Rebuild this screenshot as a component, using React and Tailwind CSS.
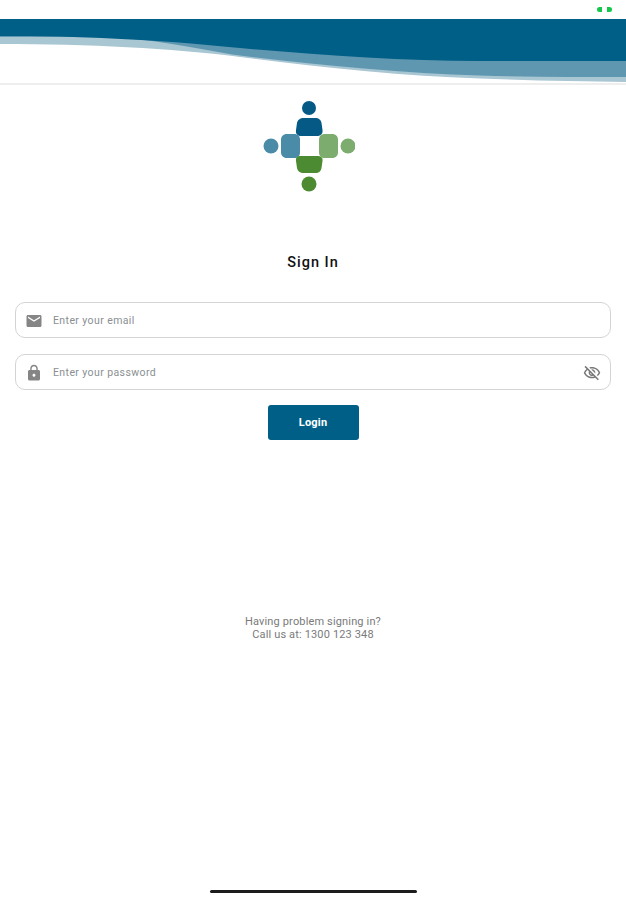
import React from 'react';
import { MdEmail, MdLock, MdOutlineVisibilityOff } from 'react-icons/md';

const Wave = () => (
    <svg viewBox="0 0 626 64" className="block w-full h-[64px]">
        <rect width="626" height="64" fill="#ffffff" />
        {/* Pale bottom band */}
        <path d="M0 0H626V63C580 62.5 530 61.5 480 59.5C400 57 320 48 240 38C170 29 90 25 0 25Z" fill="#a9c6d3" />
        {/* Mid band */}
        <path d="M0 0H626V58C580 58 530 58 480 56.500C400 54 320 46 240 36.500C200 31 170 22 110 18H0Z" fill="#6097b0" />
        {/* Dark top */}
        <path d="M0 0H626V42H480C400 42 320 36 240 29C150 20 80 17 0 17Z" fill="#005f87" />
    </svg>
);

const Logo = () => (
    <svg viewBox="0 0 92 92" className="block w-[92px] h-[92px]">
        {/* Top figure */}
        <circle cx="46" cy="8" r="7" fill="#045a85" />
        <path d="M41 18H52C56 18 58 20 58.500 23L59.500 30C60 33.500 58 36 54 36H38C34 36 32.500 33.500 33 30L34 23C34.500 20 37 18 41 18Z" fill="#045a85" />
        {/* Left figure */}
        <circle cx="8" cy="46" r="7.5" fill="#4a8ba8" />
        <path d="M24 34H31C35 34 37 36 37 40V52C37 56 35 58 31 58H24C20 58 18 55.500 18 52V40C18 36.500 20 34 24 34Z" fill="#4a8ba8" />
        {/* Right figure */}
        <circle cx="85" cy="46" r="7.5" fill="#7cad6f" />
        <path d="M62 34H69C73 34 75 36.500 75 40V52C75 55.500 73 58 69 58H62C58 58 56 56 56 52V40C56 36 58 34 62 34Z" fill="#7cad6f" />
        {/* Bottom figure */}
        <circle cx="46" cy="84" r="7.5" fill="#4c8b32" />
        <path d="M38 56H54C58 56 60 57.500 59.500 61L58.500 68C58 71 56 73 52 73H41C37 73 34.500 71 34 68L33 61C32.500 57.500 34 56 38 56Z" fill="#4c8b32" />
    </svg>
);

const Field = ({ icon, placeholder, trailing }) => (
    <div className="flex items-center h-9 rounded-[10px] border border-[#d4d4d4] bg-white pl-[9px] pr-[9px] pt-[1px]">
        {icon}
        <span className="ml-[10px] flex-1 text-[10.5px] tracking-[0.4px] text-[#8a8f92]">{placeholder}</span>
        {trailing}
    </div>
);

const App = () => {
    return (
        <div className="relative w-[626px] h-[900px] bg-white overflow-hidden font-['Roboto',sans-serif]">
            {/* Status bar */}
            <div className="flex h-[19px] justify-end items-center pr-[14px] gap-[5px]">
                <div className="w-[5px] h-[5px] bg-[#12c84a] rounded-l-sm" />
                <div className="w-[5px] h-[5px] bg-[#12c84a] rounded-r-sm" />
            </div>

            <Wave />
            <div className="h-[2px] bg-[#eeeeee]" />

            <div className="flex justify-center pt-[15px]">
                <div className="mr-[8px]">
                    <Logo />
                </div>
            </div>

            <h1 className="mt-[61px] text-center text-[14.5px] leading-5 font-medium tracking-[1px] text-[#111111]">
                Sign In
            </h1>

            {/* Form */}
            <div className="mt-[29px] px-[15px] flex flex-col gap-4">
                <Field icon={<MdEmail className="w-[18px] h-[18px] text-[#858585]" />} placeholder="Enter your email" />
                <Field
                    icon={<MdLock className="w-[18px] h-[18px] text-[#858585]" />}
                    placeholder="Enter your password"
                    trailing={<MdOutlineVisibilityOff className="w-[18px] h-[18px] text-[#7a7a7a]" />}
                />
            </div>

            <div className="mt-[15px] flex justify-center">
                <button className="w-[91px] h-[35px] pt-[1px] rounded-[3px] bg-[#005f87] text-white text-[11px] font-bold tracking-[0.2px]">
                    Login
                </button>
            </div>

            <div className="mt-[175px] text-center text-[11px] leading-[13px] tracking-[0.15px] text-[#7a7a7a]">
                <div>Having problem signing in?</div>
                <div>Call us at: 1300 123 348</div>
            </div>

            {/* Home indicator */}
            <div className="absolute left-[210px] top-[890px] w-[207px] h-[3px] rounded-full bg-[#1c1c1c]" />
        </div>
    );
};

export default App;
